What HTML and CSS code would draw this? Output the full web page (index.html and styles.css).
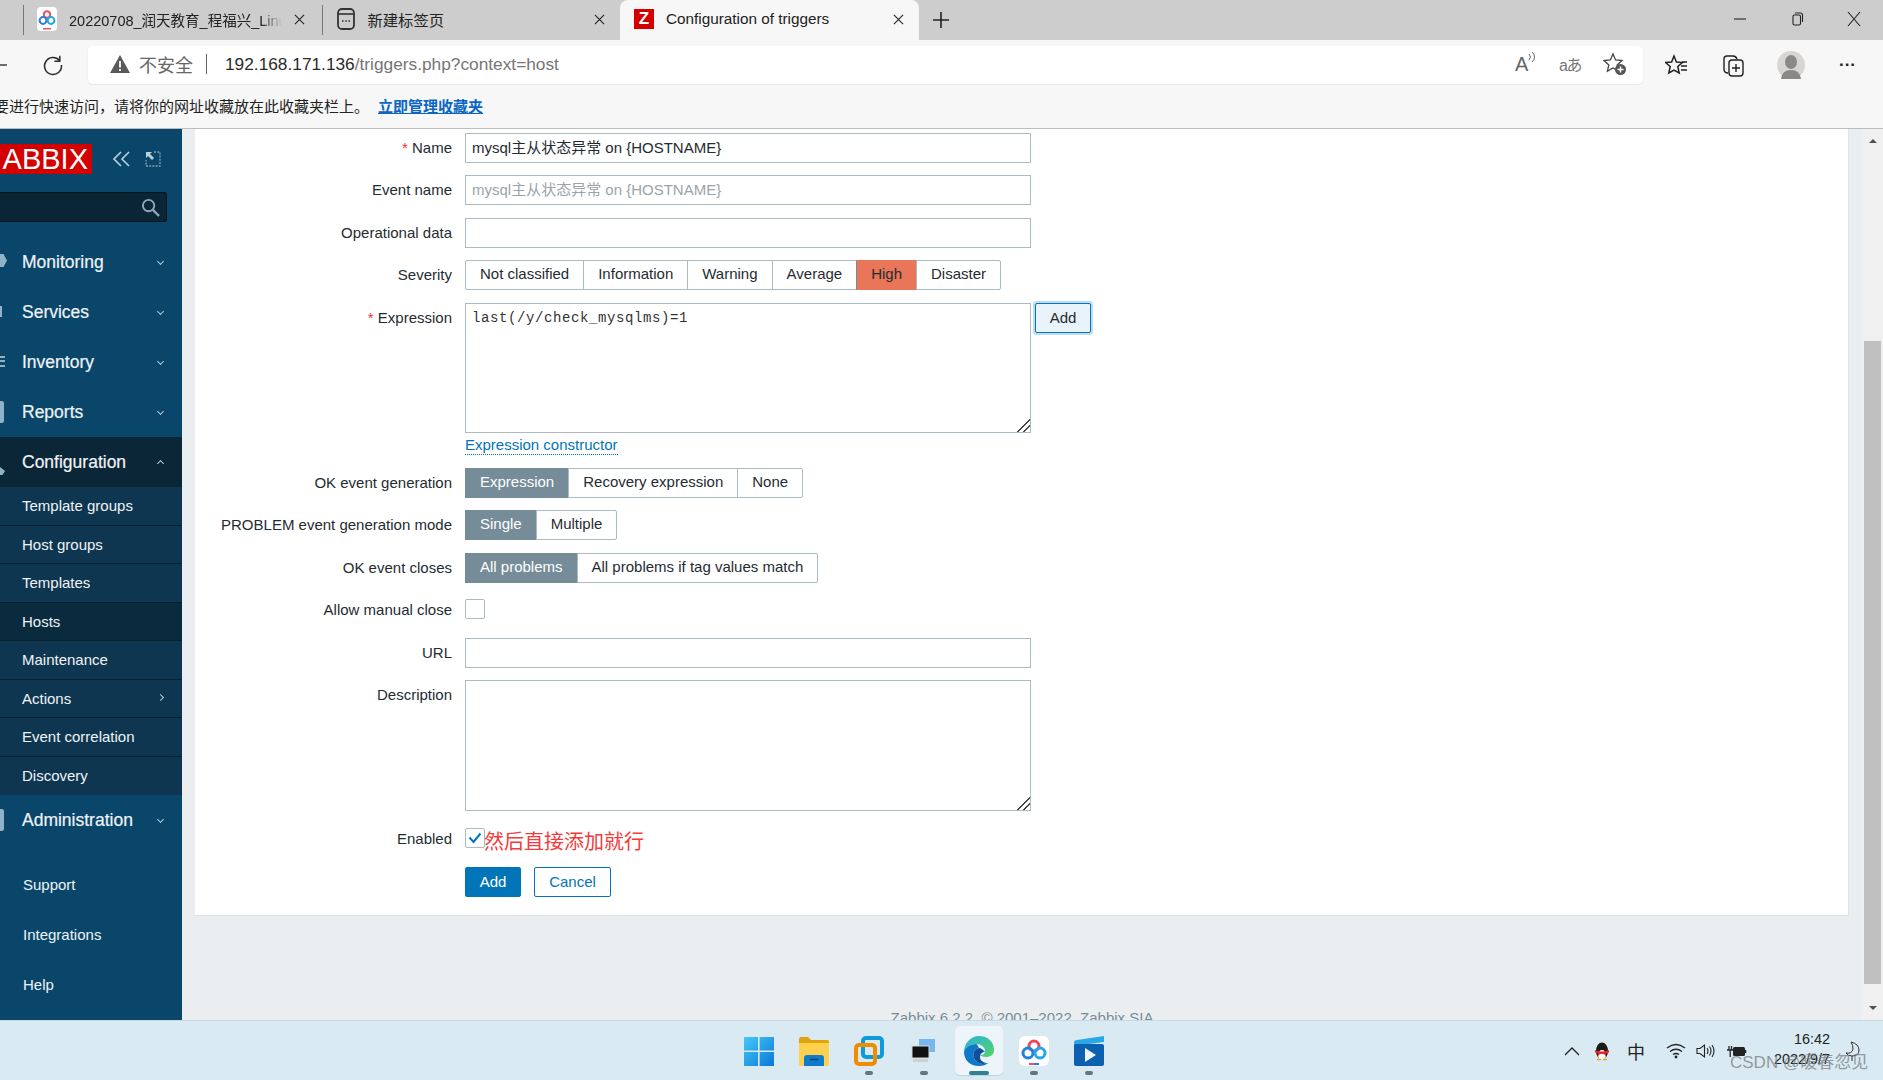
FILE: index.html
```html
<!DOCTYPE html>
<html lang="zh-CN">
<head>
<meta charset="utf-8">
<title>Configuration of triggers</title>
<link rel="stylesheet" href="styles.css">
</head>
<body>
<div class="tabstrip">
  <div class="tab">
    <svg class="fav" viewBox="0 0 20 24"><rect width="20" height="24" rx="4" fill="#fff"/><circle cx="10" cy="7.5" r="3.2" fill="none" stroke="#e8505b" stroke-width="2"/><circle cx="6" cy="13.5" r="3.4" fill="none" stroke="#2d7de0" stroke-width="2"/><circle cx="14" cy="13.5" r="3.4" fill="none" stroke="#20a5e6" stroke-width="2"/><rect x="6" y="21" width="8" height="1.5" fill="#e8505b"/></svg>
    <span class="tab-title clip">20220708_润天教育_程福兴_Linux</span>
    <svg class="tab-x" viewBox="0 0 12 12"><path d="M1 1l10 10M11 1L1 11" stroke="#222" stroke-width="1.2"/></svg>
  </div>
  <div class="tab">
    <svg class="fav" viewBox="0 0 20 24"><rect x="2" y="2" width="16" height="20" rx="4" fill="none" stroke="#333" stroke-width="1.8"/><path d="M2 7h16" stroke="#333" stroke-width="1.6"/><path d="M6 14h1.6M9.2 14h1.6M12.4 14H14" stroke="#333" stroke-width="1.6"/></svg>
    <span class="tab-title">新建标签页</span>
    <svg class="tab-x" viewBox="0 0 12 12"><path d="M1 1l10 10M11 1L1 11" stroke="#222" stroke-width="1.2"/></svg>
  </div>
  <div class="tab active">
    <span class="zfav">Z</span>
    <span class="tab-title">Configuration of triggers</span>
    <svg class="tab-x" viewBox="0 0 12 12"><path d="M1 1l10 10M11 1L1 11" stroke="#222" stroke-width="1.2"/></svg>
  </div>
  <svg class="newtab" viewBox="0 0 18 18"><path d="M9 1v16M1 9h16" stroke="#222" stroke-width="1.6"/></svg>
  <div class="winctl">
    <svg viewBox="0 0 16 16"><path d="M2 8h12" stroke="#222" stroke-width="1.1"/></svg>
    <svg viewBox="0 0 16 16"><rect x="4" y="4" width="7.5" height="10" rx="1.5" fill="none" stroke="#222" stroke-width="1.1"/><path d="M6 2h5.500a2 2 0 0 1 2 2v7" fill="none" stroke="#222" stroke-width="1.1"/></svg>
    <svg viewBox="0 0 16 16"><path d="M2 1l12 14M14 1L2 15" stroke="#222" stroke-width="1.1"/></svg>
  </div>
</div>

<div class="toolbar">
  <svg class="back" viewBox="0 0 8 4"><path d="M0 2h7" stroke="#333" stroke-width="1.4"/></svg>
  <svg class="reload" viewBox="0 0 22 22"><path d="M17.5 6.5A8.5 8.5 0 1 0 19.5 11" fill="none" stroke="#2b2b2b" stroke-width="1.5"/><path d="M17.8 1.8v5.4h-5.4" fill="none" stroke="#2b2b2b" stroke-width="1.5"/></svg>
  <div class="address">
    <svg class="warn" viewBox="0 0 20 18"><path d="M10 0L20 18H0z" fill="#5a5a5a"/><path d="M10 6v6.5M10 14v2" stroke="#fff" stroke-width="1.8"/></svg>
    <span class="insecure">不安全</span>
    <span class="addr-sep"></span>
    <span class="url"><span class="host">192.168.171.136</span>/triggers.php?context=host</span>
    <span class="addr-icons">
      <span class="readaloud"><span class="ra-a">A</span><svg viewBox="0 0 8 14"><path d="M1 2q3 3 0 6M4 0q5 5 0 10" fill="none" stroke="#666" stroke-width="1"/></svg></span>
      <span class="translate">aあ</span>
      <svg class="star-add" viewBox="0 0 24 24"><path d="M10 2l2.6 6 6.4.6-4.8 4.3 1.4 6.3L10 16l-5.6 3.2 1.4-6.3L1 8.6 7.400 8z" fill="none" stroke="#444" stroke-width="1.300"/><circle cx="17.500" cy="17.500" r="5.500" fill="#555"/><path d="M17.500 14.500v6M14.500 17.500h6" stroke="#fff" stroke-width="1.500"/></svg>
    </span>
  </div>
  <div class="tool-icons">
    <svg viewBox="0 0 24 24"><path d="M9 3l2.400 6 6 .5-4.600 4 1.400 6.500L9 17l-5.200 3 1.400-6.500-4.600-4 6-.5z" fill="none" stroke="#222" stroke-width="1.500"/><path d="M17 9h5M16 13h6M16 17h6" stroke="#222" stroke-width="1.400"/></svg>
    <svg viewBox="0 0 24 24"><path d="M7 20Q3 20 3 16V6q0-3 3-3h6q3 0 4 3" fill="none" stroke="#222" stroke-width="1.400"/><rect x="8" y="7" width="14" height="16" rx="3" fill="#f7f7f7" stroke="#222" stroke-width="1.400"/><path d="M15 11v8M11 15h8" stroke="#222" stroke-width="1.400"/></svg>
    <svg class="avatar" viewBox="0 0 28 28"><circle cx="14" cy="14" r="14" fill="#d8d6d2"/><ellipse cx="14" cy="11" rx="6" ry="7" fill="#8a8886"/><path d="M4 28q1-9 10-9t10 9z" fill="#8a8886"/></svg>
    <span class="dots">···</span>
  </div>
</div>

<div class="bookmarks">
  <span>要进行快速访问，请将你的网址收藏放在此收藏夹栏上。</span>
  <a class="bm-link">立即管理收藏夹</a>
</div>

<div class="app">
  <nav class="sidebar">
    <div class="side-head">
      <span class="logo">ABBIX</span>
      <svg class="collapse" viewBox="0 0 18 16"><path d="M8 1L1 8l7 7M16 1L9 8l7 7" fill="none" stroke="#b9d0dd" stroke-width="1.600"/></svg>
      <svg class="kiosk" viewBox="0 0 16 16"><path d="M9 1h6v14H1V9" fill="none" stroke="#7f9fb1" stroke-width="1.300" stroke-dasharray="2 1.200"/><path d="M1 1h6L5 3l4 4-2 2-4-4-2 2z" fill="#b9d0dd"/></svg>
    </div>
    <div class="search">
      <svg viewBox="0 0 20 20"><circle cx="8" cy="8" r="6" fill="none" stroke="#8fa8b6" stroke-width="2"/><path d="M12.500 12.500L19 19" stroke="#8fa8b6" stroke-width="2.400"/></svg>
    </div>
    <ul class="menu">
      <li class="item"><span class="ico ico-eye"></span>Monitoring<i class="chev down"></i></li>
      <li class="item"><span class="ico ico-svc"></span>Services<i class="chev down"></i></li>
      <li class="item"><span class="ico ico-inv"></span>Inventory<i class="chev down"></i></li>
      <li class="item"><span class="ico ico-rep"></span>Reports<i class="chev down"></i></li>
      <li class="item open"><span class="ico ico-cfg"></span>Configuration<i class="chev up"></i></li>
      <li class="sub">Template groups</li>
      <li class="sub">Host groups</li>
      <li class="sub">Templates</li>
      <li class="sub current">Hosts</li>
      <li class="sub">Maintenance</li>
      <li class="sub">Actions<i class="chev right"></i></li>
      <li class="sub">Event correlation</li>
      <li class="sub last">Discovery</li>
      <li class="item"><span class="ico ico-adm"></span>Administration<i class="chev down"></i></li>
    </ul>
    <ul class="menu-bottom">
      <li>Support</li>
      <li>Integrations</li>
      <li>Help</li>
    </ul>
  </nav>

  <main class="main">
    <form class="card">
      <div class="row"><label class="lbl"><b class="req">*</b> Name</label><input class="field" value="mysql主从状态异常 on {HOSTNAME}"></div>
      <div class="row"><label class="lbl">Event name</label><input class="field" placeholder="mysql主从状态异常 on {HOSTNAME}"></div>
      <div class="row"><label class="lbl">Operational data</label><input class="field"></div>
      <div class="row"><label class="lbl">Severity</label>
        <div class="seg"><span>Not classified</span><span>Information</span><span>Warning</span><span>Average</span><span class="high">High</span><span>Disaster</span></div>
      </div>
      <div class="row"><label class="lbl"><b class="req">*</b> Expression</label>
        <div class="expr-cell">
          <div class="expr-line">
            <textarea class="area expr">last(/y/check_mysqlms)=1</textarea>
            <span class="btn-add-side">Add</span>
          </div>
          <a class="dotted">Expression constructor</a>
        </div>
      </div>
      <div class="row"><label class="lbl">OK event generation</label>
        <div class="seg"><span class="on">Expression</span><span>Recovery expression</span><span>None</span></div>
      </div>
      <div class="row"><label class="lbl">PROBLEM event generation mode</label>
        <div class="seg"><span class="on">Single</span><span>Multiple</span></div>
      </div>
      <div class="row"><label class="lbl">OK event closes</label>
        <div class="seg"><span class="on">All problems</span><span>All problems if tag values match</span></div>
      </div>
      <div class="row"><label class="lbl">Allow manual close</label><span class="check"></span></div>
      <div class="row"><label class="lbl">URL</label><input class="field"></div>
      <div class="row"><label class="lbl">Description</label><textarea class="area desc"></textarea></div>
      <div class="row"><label class="lbl">Enabled</label>
        <span class="check"><svg viewBox="0 0 14 12"><path d="M1.500 5.500L5.500 10 12.500 1.500" fill="none" stroke="#0275b8" stroke-width="2"/></svg></span>
        <span class="note">然后直接添加就行</span>
      </div>
      <div class="row actions">
        <span class="btn primary">Add</span>
        <span class="btn ghost">Cancel</span>
      </div>
    </form>
    <footer class="foot">Zabbix 6.2.2. © 2001–2022, Zabbix SIA</footer>
  </main>

  <aside class="scroll">
    <i class="arrow up-a"></i>
    <div class="thumb"></div>
    <i class="arrow down-a"></i>
  </aside>
</div>

<div class="taskbar">
  <div class="apps">
    <svg class="app-ico" viewBox="0 0 30 30"><defs><linearGradient id="w" x1="0" y1="0" x2="1" y2="1"><stop offset="0" stop-color="#45c8f8"/><stop offset="1" stop-color="#0a78d8"/></linearGradient></defs><path d="M0 1h14v13.400H0zM15.600 1H30v13.400H15.600zM0 16h14v14H0zM15.600 16H30v14H15.600z" fill="url(#w)"/></svg>
    <svg class="app-ico" viewBox="0 0 30 30"><path d="M0 3q0-2 2-2h7l3 3h16q2 0 2 2v4H0z" fill="#e0a30e"/><path d="M0 7h30v21q0 2-2 2H2q-2 0-2-2z" fill="#fdd04e"/><path d="M5 22q0-3 3-3h14q3 0 3 3v8H5z" fill="#0f7ccb"/><path d="M11 23.500h8" stroke="#0a3f70" stroke-width="1.500"/></svg>
    <span class="app-wrap"><svg class="app-ico" viewBox="0 0 30 30"><rect x="9" y="2" width="19" height="19" rx="3" fill="none" stroke="#109bd8" stroke-width="4"/><rect x="2" y="9" width="19" height="19" rx="3" fill="none" stroke="#f18c00" stroke-width="4"/></svg><i class="pip"></i></span>
    <span class="app-wrap"><svg class="app-ico" viewBox="0 0 30 30"><rect x="10" y="3" width="16" height="13" fill="#76b8ee"/><rect x="3" y="10" width="17" height="12" fill="#111" stroke="#d8d8d8"/><rect x="4" y="23" width="15" height="3" fill="#cfcfcf"/></svg><i class="pip"></i></span>
    <span class="app-wrap edge-wrap"><svg class="app-ico" viewBox="0 0 30 30"><defs><linearGradient id="e1" x1="0" y1="0" x2="1" y2="1"><stop offset="0" stop-color="#2bb3d8"/><stop offset="1" stop-color="#55d36a"/></linearGradient></defs><path d="M15 0C24 0 30 6 30 14c0 5-4 7-8 7-3 0-5-1-6-2 3 0 5-1 5-4 0-4-4-7-9-7C7 8 2 11 0 16 0 7 7 0 15 0z" fill="url(#e1)"/><path d="M12 8C6 8 1 12 0 16c0 8 6 14 15 14 4 0 7-1 9-3-6 2-12 0-14-5-2-5 1-9 5-10-1-2-2-4-3-4z" fill="#0f78c8"/><path d="M15 12c-4 1-7 5-5 10 1 3 5 6 9 6 2 0 4-1 5-1-4 0-8-2-8-6 0-3 2-5 5-5-2-2-4-4-6-4z" fill="#124f9a"/></svg><i class="pip wide"></i></span>
    <span class="app-wrap"><svg class="app-ico" viewBox="0 0 30 30"><rect width="30" height="30" rx="6" fill="#fff"/><circle cx="15" cy="10" r="5" fill="none" stroke="#ec4a5a" stroke-width="3"/><circle cx="9" cy="17" r="5" fill="none" stroke="#1f82e0" stroke-width="3"/><circle cx="21" cy="17" r="5" fill="none" stroke="#22a7e8" stroke-width="3"/><path d="M10 28h5" stroke="#f0506e" stroke-width="2"/><path d="M15 28h5" stroke="#2d7de0" stroke-width="2"/></svg><i class="pip"></i></span>
    <span class="app-wrap"><svg class="app-ico" viewBox="0 0 30 30"><path d="M0 7q0-3 3-3L30 0v6L0 10z" fill="#29a8e8"/><rect y="8" width="30" height="22" rx="2" fill="#0d5fb0"/><path d="M11 12l11 7-11 7z" fill="#eaf4fb"/></svg><i class="pip"></i></span>
  </div>
  <div class="tray">
    <svg class="t-chev" viewBox="0 0 16 10"><path d="M1 9l7-7 7 7" fill="none" stroke="#222" stroke-width="1.300"/></svg>
    <svg class="t-qq" viewBox="0 0 16 20"><ellipse cx="8" cy="10" rx="6" ry="8.500" fill="#1a1a1a"/><ellipse cx="8" cy="14" rx="4" ry="5" fill="#fff"/><path d="M1 9q7 3 14 0v2.500l-3 1v3l-2-2.500H6l-2 2v-2.500l-3-1z" fill="#e8262a"/><path d="M3 18.500h4M9 18.500h4" stroke="#f1a10f" stroke-width="1.500"/></svg>
    <span class="t-ime">中</span>
    <svg class="t-wifi" viewBox="0 0 20 16"><path d="M1 5q9-7 18 0M4 8.500q6-4.500 12 0M7 11.500q3-2 6 0" fill="none" stroke="#222" stroke-width="1.300"/><circle cx="10" cy="14" r="1.400" fill="#222"/></svg>
    <svg class="t-vol" viewBox="0 0 20 16"><path d="M1 5.500h3L8.500 2v12L4 10.500H1z" fill="none" stroke="#222" stroke-width="1.100"/><path d="M11 5q2 3 0 6M13.500 3.500q3 4.500 0 9M16 2q4 6 0 12" fill="none" stroke="#222" stroke-width="1.100"/></svg>
    <svg class="t-bat" viewBox="0 0 20 16"><rect x="6" y="4" width="12" height="9" rx="1.500" fill="#222"/><path d="M18.500 7v3" stroke="#222" stroke-width="1.500"/><path d="M0 7h6M2 3v4M4.500 3v4M3.200 7v7" stroke="#222" stroke-width="1.300"/></svg>
    <div class="clock"><span>16:42</span><span>2022/9/7</span></div>
    <svg class="t-moon" viewBox="0 0 16 20"><path d="M6 1q8 2 8 8 0 6-7 6-4 0-6-3 6 1 7-4 0-4-2-7z" fill="none" stroke="#333" stroke-width="1"/><path d="M7 15v5" stroke="#333"/></svg>
  </div>
  <span class="watermark">CSDN @暖春忽见</span>
</div>
</body>
</html>
```
FILE: styles.css
```css
* { box-sizing: border-box; }
html, body { margin: 0; height: 100%; }
body {
  width: 1883px; height: 1080px; overflow: hidden;
  display: flex; flex-direction: column;
  font: 15px "Liberation Sans", "Noto Sans CJK SC", sans-serif;
  color: #1f2c33; background: #ebeef0;
}
ul { list-style: none; margin: 0; padding: 0; }

/* Tabs */
.tabstrip { height: 40px; flex: none; background: #cdcdcd; display: flex; align-items: stretch; padding-left: 23px; position: relative; color: #222; }
.tab { width: 298.500px; display: flex; align-items: center; padding: 0 17px 2px 13px; gap: 12px; border-left: 1px solid #888; background-clip: padding-box; }
.tab:nth-child(1), .tab:nth-child(2) { border-image: linear-gradient(#cdcdcd 15%, #777 15%, #777 85%, #cdcdcd 85%) 1; }
.tab:nth-child(2) { padding-right: 15px; }
.tab.active { border: 0; background: #f7f7f7; border-radius: 8px 8px 0 0; padding: 0 15px 2px 14px; }
.fav { width: 20px; height: 24px; flex: none; }
.zfav { width: 20px; height: 20px; flex: none; background: #d40000; color: #fff; font-weight: 700; font-size: 17px; line-height: 20px; text-align: center; }
.tab-title { flex: 1; white-space: nowrap; overflow: hidden; font-size: 15.300px; }
.tab-title.clip { font-size: 14.500px; -webkit-mask-image: linear-gradient(90deg, #000 90%, transparent); }
.tab-x { width: 11px; height: 11px; flex: none; }
.newtab { width: 18px; height: 18px; margin: 11px 0 0 13px; }
.winctl { margin-left: auto; display: flex; align-items: center; gap: 41px; padding: 0 21px 3px 0; }
.winctl svg { width: 16px; height: 16px; }

/* Toolbar */
.toolbar { height: 45px; flex: none; background: #f7f7f7; display: flex; align-items: center; padding-top: 5px; }
.back { width: 8px; height: 4px; flex: none; }
.reload { width: 22px; height: 22px; margin: 0 24px 0 34px; flex: none; }
.address { width: 1555px; height: 38px; background: #fff; border-radius: 5px; box-shadow: 0 1px 2px rgba(0,0,0,.08); display: flex; align-items: center; padding: 0 0 2px 22px; }
.warn { width: 20px; height: 18px; flex: none; }
.insecure { margin-left: 9px; font-size: 18px; color: #666; }
.addr-sep { width: 1px; height: 20px; background: #666; margin: 0 18px 0 13px; }
.url { font-size: 17.300px; color: #767676; }
.host { color: #2b2b2b; }
.addr-icons { margin-left: auto; display: flex; align-items: center; gap: 22px; padding-right: 16px; }
.readaloud { display: flex; align-items: flex-start; width: 22px; }
.ra-a { font-size: 20px; color: #666; line-height: 24px; }
.readaloud svg { width: 8px; height: 14px; }
.translate { font-size: 16px; color: #777; letter-spacing: -1.500px; width: 22px; }
.star-add { width: 24px; height: 24px; }
.tool-icons { display: flex; align-items: center; margin-left: 6px; }
.tool-icons svg { width: 24px; height: 24px; margin: 0 16px; }
.tool-icons svg.avatar { width: 28px; height: 28px; }
.dots { font-size: 17px; font-weight: 700; color: #222; margin-left: 18px; }

/* Bookmarks */
.bookmarks { height: 44px; flex: none; background: #f7f7f7; border-bottom: 1px solid #bdbdbd; display: flex; align-items: center; white-space: nowrap; color: #222; padding-bottom: 3px; margin-left: -6px; }
.bm-link { color: #0a66c2; font-weight: 700; text-decoration: underline; margin-left: 9px; }

/* App layout */
.app { flex: 1; min-height: 0; display: flex; overflow: hidden; }

/* Sidebar */
.sidebar { width: 182px; flex: none; background: #0a466a; color: #eef3f6; display: flex; flex-direction: column; }
.side-head { height: 63px; display: flex; align-items: flex-start; padding-top: 15px; }
.logo { width: 92px; height: 30px; background: #d40000; color: #fff; font-size: 29px; line-height: 30px; text-align: right; padding-right: 4px; }
.collapse { width: 18px; height: 16px; margin: 7px 0 0 21px; }
.kiosk { width: 16px; height: 16px; margin: 7px 0 0 14px; }
.search { height: 30px; width: 167px; background: #0a2636; border: 1px solid #06161f; border-left: 0; border-radius: 0 3px 3px 0; display: flex; align-items: center; justify-content: flex-end; padding-right: 6px; margin-bottom: 15px; }
.search svg { width: 19px; height: 19px; }
.item { height: 50px; display: flex; align-items: center; padding-left: 22px; font-size: 17.500px; position: relative; -webkit-text-stroke: .2px; }
.item.open { background: #0b2637; }
.sub { height: 38.500px; display: flex; align-items: center; padding-left: 22px; background: #0f3650; border-bottom: 1px solid #07202f; position: relative; }
.sub.current { background: #0a2a3e; }
.sub.last { border-bottom: 0; }
.chev { position: absolute; left: 158px; top: 50%; width: 5px; height: 5px; border: solid #b5cad6; border-width: 0 1.400px 1.400px 0; }
.chev.down { margin-top: -3px; transform: rotate(45deg); }
.chev.up { margin-top: -1px; transform: rotate(-135deg); }
.chev.right { margin-top: -3px; transform: rotate(-45deg); }
.ico { position: absolute; left: 0; top: 50%; background: #8fb3c6; }
.ico-eye { width: 7px; height: 13px; margin-top: -8px; clip-path: polygon(0 0, 50% 0, 100% 50%, 50% 100%, 0 100%); }
.ico-svc { width: 2px; height: 11px; margin-top: -6px; }
.ico-inv { width: 5px; height: 11px; margin-top: -6px; background: repeating-linear-gradient(#8fb3c6 0 2px, transparent 2px 4.500px); }
.ico-rep { width: 4px; height: 22px; margin-top: -11px; border-radius: 0 2px 2px 0; }
.ico-cfg { width: 5px; height: 8px; margin-top: 5px; clip-path: polygon(0 0, 100% 50%, 50% 100%, 0 100%); }
.ico-adm { width: 4px; height: 22px; margin-top: -11px; border-radius: 0 2px 2px 0; }
.menu-bottom { margin-top: 14px; }
.menu-bottom li { height: 50px; display: flex; align-items: center; padding-left: 23px; }

/* Main */
.main { flex: 1; min-width: 0; padding: 0 13px; }
.card { height: 787px; background: #fff; border: solid #dfe4e7; border-width: 0 1px 1px 0; padding-top: 3.700px; display: flex; flex-direction: column; gap: 12.500px; }
.row { display: flex; align-items: flex-start; min-height: 30px; }
.lbl { width: 257px; flex: none; margin-right: 13px; text-align: right; line-height: 29px; }
.req { color: #e33734; font-weight: 400; }
.field { width: 566px; height: 30px; border: 1px solid #acbbc2; border-radius: 0; padding: 0 6px 2px; font: inherit; color: #1f2c33; background: #fff; outline: none; }
.field::placeholder { color: #9aa5ab; opacity: 1; }
.seg { display: flex; height: 30px; border: 1px solid #acbbc2; border-radius: 2px; background: #fff; }
.seg span { padding: 0 14px; line-height: 26px; border-left: 1px solid #acbbc2; white-space: nowrap; }
.seg span:first-child { border-left: 0; }
.seg .on { background: #768d99; color: #fff; margin: -1px 0 -1px -1px; line-height: 28px; padding-left: 15px; }
.seg .high { background: #e97659; margin: -1px 0; line-height: 28px; border-left-color: #768d99; }
.expr-cell { display: flex; flex-direction: column; }
.expr-line { display: flex; align-items: flex-start; gap: 4px; }
.area { width: 566px; border: 1px solid #acbbc2; border-radius: 0; padding: 4px 6px; outline: none; display: block; }
.area::-webkit-resizer { background: linear-gradient(135deg, transparent 55%, #444 55%, #444 62%, transparent 62%, transparent 76%, #444 76%, #444 83%, transparent 83%); }
.expr { height: 130px; font: 14px/17px "Liberation Mono", monospace; letter-spacing: .6px; padding-top: 6px; color: #333; }
.desc { height: 131px; font: inherit; }
.btn-add-side { width: 56px; height: 30px; line-height: 27px; text-align: center; background: #e8f3fb; border: 1px solid #0275b8; border-radius: 2px; box-shadow: 0 0 0 2px #bcdcf2; }
.dotted { color: #0275b8; border-bottom: 1px dotted #0275b8; align-self: flex-start; line-height: 17px; margin-top: 3px; height: 19.500px; }
.check { width: 20px; height: 20px; margin-top: 4px; border: 1px solid #acbbc2; border-radius: 2px; background: #fff; display: flex; align-items: center; justify-content: center; flex: none; }
.check svg { width: 14px; height: 12px; }
.note { font-size: 20px; line-height: 24px; color: #f43a3a; margin: 6px 0 0 -1px; }
.actions { padding-left: 270px; gap: 13px; margin-top: .5px; }
.btn { height: 30px; line-height: 27px; text-align: center; border: 1px solid #0275b8; border-radius: 2px; }
.primary { width: 56px; background: #0275b8; color: #fff; }
.ghost { width: 77px; color: #0275b8; background: #fff; }
.foot { margin-top: 93px; text-align: center; color: #768d99; line-height: 17px; white-space: nowrap; }

/* Scrollbar */
.scroll { width: 21px; flex: none; background: #f0f0f0; display: flex; flex-direction: column; align-items: center; }
.thumb { width: 17px; height: 643px; background: #c0c0c0; margin: 198px 0 22px; }
.arrow { width: 0; height: 0; border: 4.500px solid transparent; }
.up-a { border-bottom-color: #505050; border-top: 0; height: 5px; margin-top: 9px; }
.down-a { border-top-color: #505050; border-bottom: 0; height: 5px; }

/* Taskbar */
.taskbar { height: 60px; flex: none; background: #d9eaf2; border-top: 1px solid #c6dae4; display: flex; position: relative; }
.apps { display: flex; padding-left: 744px; align-items: flex-start; padding-top: 15px; gap: 25px; }
.app-ico { width: 30px; height: 30px; display: block; flex: none; }
.app-wrap { position: relative; display: block; width: 30px; height: 30px; }
.edge-wrap::before { content: ""; position: absolute; inset: -10px -9px -9px; background: #edf5fa; border-radius: 5px; box-shadow: 0 1px 1px rgba(0,0,0,.1); }
.edge-wrap .app-ico { position: relative; }
.pip { position: absolute; left: 50%; bottom: -9px; width: 8px; height: 4px; margin-left: -4px; background: #68737a; border-radius: 2px; }
.pip.wide { width: 20px; margin-left: -10px; background: #2e8294; }
.tray { position: relative; margin-left: auto; display: flex; align-items: center; padding-right: 22px; }
.tray svg { display: block; flex: none; }
.t-chev { width: 16px; height: 10px; margin-right: 14px; }
.t-qq { width: 16px; height: 20px; margin-right: 17px; }
.t-ime { font-size: 18px; margin-right: 21px; color: #222; }
.t-wifi { width: 20px; height: 16px; margin-right: 10px; }
.t-vol { width: 20px; height: 16px; margin-right: 11px; }
.t-bat { width: 20px; height: 16px; margin-right: 23px; }
.clock { display: flex; flex-direction: column; align-items: flex-end; width: 60px; font-size: 14.400px; line-height: 20px; color: #222; padding-bottom: 4px; }
.t-moon { width: 16px; height: 20px; margin-left: 15px; }
.watermark { position: absolute; left: 1730px; top: 27px; font-size: 17px; color: rgba(120,125,130,.75); white-space: nowrap; }
```
